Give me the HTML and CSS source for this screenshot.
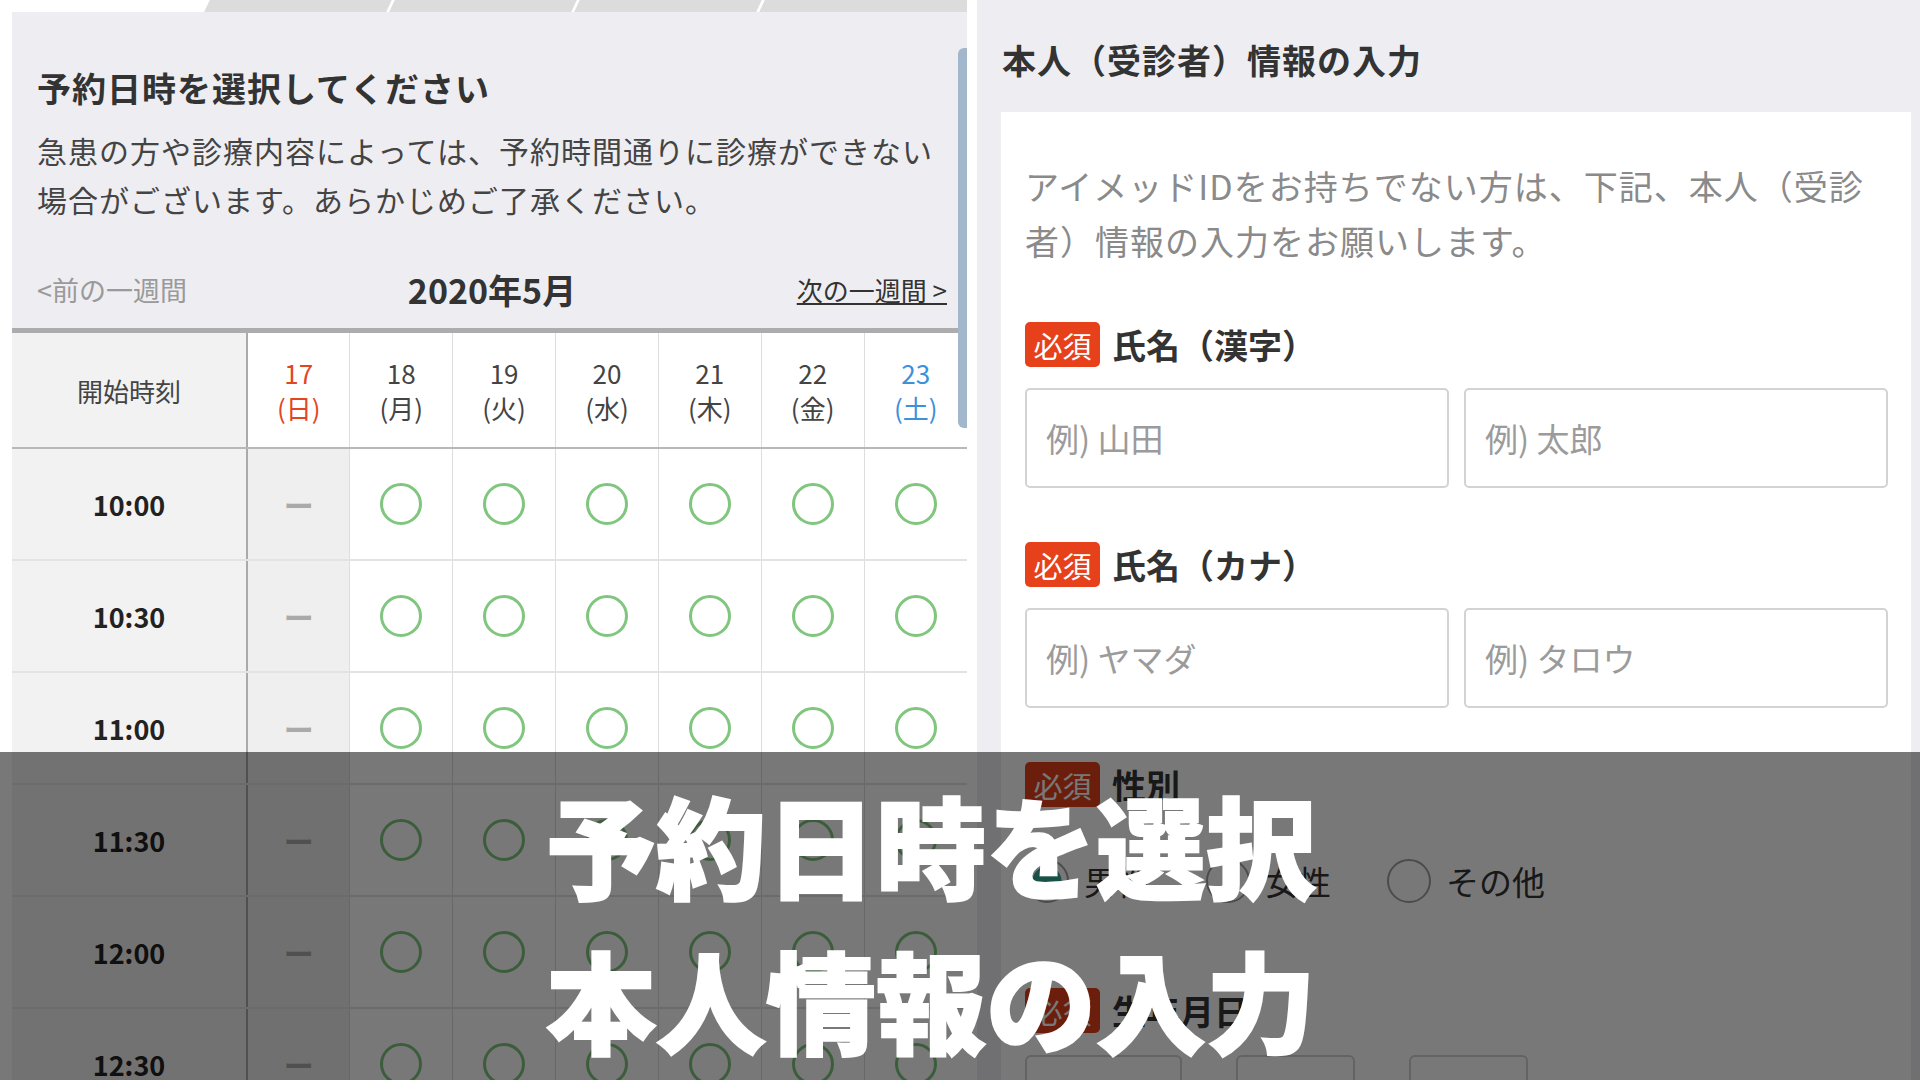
FILE: index.html
```html
<!DOCTYPE html>
<html lang="ja">
<head>
    <meta charset="UTF-8">
    <meta name="viewport" content="width=device-width, initial-scale=1.0">
    <title>予約日時を選択 / 本人情報の入力</title>
    <link rel="stylesheet" href="styles.css">
</head>
<body>

<div class="screen">
    <!-- 左: 予約日時の選択 -->
    <div class="left">
        <div class="tabs">
            <div class="tab active"></div>
            <div class="tab"></div>
            <div class="tab"></div>
            <div class="tab"></div>
            <div class="tab"></div>
        </div>

        <div class="panel">
            <div class="scroll-thumb"></div>

            <h2 class="title">予約日時を選択してください</h2>
            <p class="note">急患の方や診療内容によっては、予約時間通りに診療ができない場合がございます。あらかじめご了承ください。</p>

            <div class="week-nav">
                <span class="prev">&lt;前の一週間</span>
                <span class="month">2020年5月</span>
                <a class="next">次の一週間 &gt;</a>
            </div>

            <table class="slots">
                <colgroup>
                    <col class="col-time">
                    <col><col><col><col><col><col><col>
                </colgroup>
                <thead>
                    <tr>
                        <th class="head-time">開始時刻</th>
                        <th class="sun">17<br>(日)</th>
                        <th>18<br>(月)</th>
                        <th>19<br>(火)</th>
                        <th>20<br>(水)</th>
                        <th>21<br>(木)</th>
                        <th>22<br>(金)</th>
                        <th class="sat">23<br>(土)</th>
                    </tr>
                </thead>
                <tbody id="slotRows">
                    <!-- 行はスクリプトで追加 -->
                </tbody>
            </table>
        </div>
    </div>

    <!-- 右: 本人情報の入力 -->
    <div class="right">
        <h2 class="form-title">本人（受診者）情報の入力</h2>

        <div class="card">
            <p class="lead">アイメッドIDをお持ちでない方は、下記、本人（受診者）情報の入力をお願いします。</p>

            <div class="field">
                <div class="field-label"><span class="badge">必須</span>氏名（漢字）</div>
                <div class="inputs">
                    <input type="text" placeholder="例) 山田">
                    <input type="text" placeholder="例) 太郎">
                </div>
            </div>

            <div class="field">
                <div class="field-label"><span class="badge">必須</span>氏名（カナ）</div>
                <div class="inputs">
                    <input type="text" placeholder="例) ヤマダ">
                    <input type="text" placeholder="例) タロウ">
                </div>
            </div>

            <div class="field">
                <div class="field-label"><span class="badge">必須</span>性別</div>
                <div class="radios">
                    <label class="radio"><span class="mark checked"></span>男性</label>
                    <label class="radio"><span class="mark"></span>女性</label>
                    <label class="radio"><span class="mark"></span>その他</label>
                </div>
            </div>

            <div class="field field-birth">
                <div class="field-label"><span class="badge">必須</span>生年月日</div>
                <div class="date-selects">
                    <div class="select year"></div>
                    <div class="select"></div>
                    <div class="select"></div>
                </div>
            </div>
        </div>
    </div>

    <div class="caption">予約日時を選択<br>本人情報の入力</div>
</div>

<script>
    // 時間枠
    const times = ["10:00", "10:30", "11:00", "11:30", "12:00", "12:30"];

    function loadSlots() {
        const tbody = document.getElementById("slotRows");
        times.forEach(time => {
            let row = tbody.insertRow();
            let cellTime = row.insertCell(0);
            cellTime.className = "time";
            cellTime.textContent = time;

            // 日曜は休診
            let cellSun = row.insertCell(1);
            cellSun.className = "closed";
            cellSun.textContent = "ー";

            for (let i = 0; i < 6; i++) {
                let cell = row.insertCell();
                let mark = document.createElement("span");
                mark.className = "ok";
                cell.appendChild(mark);
            }
        });
    }

    loadSlots();
</script>

</body>
</html>
```

FILE: styles.css
```css
body {
    margin: 0;
    background-color: #fff;
    font-family: "Noto Sans CJK JP", "Noto Sans", sans-serif;
    color: #333;
    overflow: hidden;
}

.screen {
    position: relative;
    display: flex;
    width: 1920px;
    height: 1080px;
    overflow: hidden;
}

/* 左パネル */
.left {
    flex: none;
    width: 967px;
}

.tabs {
    display: flex;
    gap: 3px;
    height: 12px;
    overflow: hidden;
    background: #fff;
}

.tab {
    flex: 0 0 182px;
    background: #dcdcdc;
    transform: skewX(-25deg);
}

.tab.active {
    flex-basis: 204px;
    background: #fff;
}

.tab:last-child {
    flex: 1 0 220px;
}

.panel {
    position: relative;
    margin-left: 12px;
    height: 1068px;
    padding-top: 50px;
    box-sizing: border-box;
    background: #eeeef2;
}

.scroll-thumb {
    position: absolute;
    top: 36px;
    right: 0;
    width: 9px;
    height: 380px;
    border-radius: 6px 0 0 6px;
    background: #a2b7cb;
    z-index: 2;
}

.title {
    margin: 0 25px;
    font-size: 34px;
    line-height: 51px;
    letter-spacing: 1px;
    font-weight: 700;
    color: #333;
}

.note {
    margin: 13px 25px 0;
    font-size: 30px;
    line-height: 49px;
    letter-spacing: 1px;
    color: #444;
}

.week-nav {
    display: grid;
    grid-template-columns: 1fr auto 1fr;
    align-items: center;
    height: 50px;
    margin: 40px 20px 14px 25px;
}

.prev {
    font-size: 27px;
    color: #9a9a9a;
}

.month {
    font-size: 34px;
    font-weight: 700;
    color: #333;
}

.next {
    justify-self: end;
    font-size: 26px;
    color: #333;
    text-decoration: underline;
}

/* 予約表 */
.slots {
    width: 100%;
    table-layout: fixed;
    border-collapse: collapse;
    border-top: 5px solid #acacac;
}

.col-time {
    width: 235px;
}

.slots th {
    height: 114px;
    padding: 0;
    background: #fff;
    border-left: 1px solid #ddd;
    border-bottom: 2px solid #b8b8b8;
    font-size: 26px;
    line-height: 35px;
    font-weight: 400;
    color: #444;
    text-align: center;
}

.slots th.head-time {
    background: #f2f2f2;
    border-left: none;
    color: #444;
}

.slots th.sun {
    border-left: 2px solid #aaa;
    color: #e2461f;
}

.slots th.sat {
    color: #3d90d9;
}

.slots td {
    height: 110px;
    padding: 0;
    border-left: 1px solid #ddd;
    border-bottom: 2px solid #e3e3e3;
    text-align: center;
    background: #fff;
}

.slots td.time {
    border-left: none;
    background: #f2f2f2;
    font-size: 27px;
    font-weight: 700;
    color: #222;
}

.slots td.closed {
    border-left: 2px solid #aaa;
    background: #efefef;
    font-size: 30px;
    font-weight: 700;
    color: #aaa;
}

.ok {
    display: inline-block;
    width: 36px;
    height: 36px;
    border: 3px solid #80c67e;
    border-radius: 50%;
    vertical-align: middle;
}

/* 右パネル */
.right {
    flex: 1;
    margin-left: 10px;
    padding: 0 9px 0 24px;
    background: #eeeef2;
}

.form-title {
    margin: 0 0 27px 1px;
    padding-top: 35px;
    font-size: 34px;
    line-height: 50px;
    letter-spacing: 1px;
    font-weight: 700;
    color: #333;
}

.card {
    height: 1000px;
    padding: 46px 23px 0 24px;
    background: #fff;
}

.lead {
    margin: 0;
    font-size: 34px;
    line-height: 55px;
    letter-spacing: 1px;
    color: #8a8a8a;
}

.field {
    margin-top: 54px;
}

.field-label {
    display: flex;
    align-items: center;
    gap: 12px;
    height: 45px;
    font-size: 34px;
    font-weight: 700;
    color: #333;
}

.badge {
    display: flex;
    align-items: center;
    justify-content: center;
    width: 75px;
    height: 45px;
    border-radius: 5px;
    background: #e6411b;
    color: #fff;
    font-size: 29px;
    font-weight: 400;
}

.inputs {
    display: grid;
    grid-template-columns: 1fr 1fr;
    gap: 15px;
    margin-top: 21px;
}

.inputs input {
    height: 100px;
    box-sizing: border-box;
    padding: 0 19px;
    border: 2px solid #d3d3d3;
    border-radius: 5px;
    font-family: inherit;
    font-size: 33px;
    color: #333;
}

.inputs input::placeholder {
    color: #9b9b9b;
}

.radios {
    display: flex;
    gap: 56px;
    margin-top: 50px;
}

.radio {
    display: flex;
    align-items: center;
    gap: 15px;
    font-size: 33px;
    color: #333;
}

.mark {
    width: 40px;
    height: 40px;
    border: 2px solid #a0a0a0;
    border-radius: 50%;
}

.mark.checked {
    background: radial-gradient(circle, #37ad99 0 14px, #fff 15px);
}

.field-birth {
    margin-top: 83px;
}

.date-selects {
    display: flex;
    gap: 54px;
    margin-top: 22px;
}

.select {
    width: 119px;
    height: 80px;
    box-sizing: border-box;
    border: 2px solid #d3d3d3;
    border-radius: 6px;
}

.select.year {
    width: 157px;
}

/* 見出しの帯 */
.caption {
    position: absolute;
    top: 752px;
    left: 0;
    right: 0;
    bottom: 0;
    padding: 14px 0 0 546px;
    background: rgba(0, 0, 0, 0.53);
    color: #fff;
    font-size: 110px;
    line-height: 155px;
    font-weight: 900;
    -webkit-text-stroke: 2px #fff;
    z-index: 5;
}
```
